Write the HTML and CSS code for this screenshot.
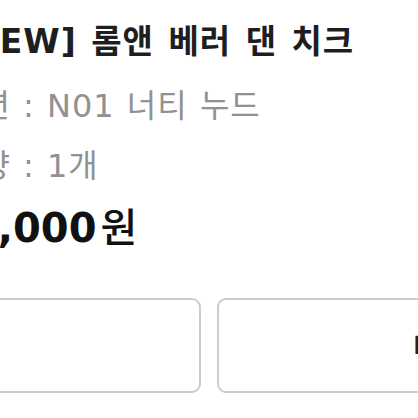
FILE: index.html
```html
<!DOCTYPE html>
<html lang="ko">

<head>
    <meta charset="UTF-8">
    <meta name="viewport" content="width=device-width, initial-scale=1.0">
    <title>장바구니</title>
    <link rel="stylesheet" href="styles.css">
</head>

<body>
    <div class="item">
        <!-- 상품 정보 -->
        <div class="item-name">[NEW] 롬앤 베러 댄 치크</div>
        <div class="item-meta">옵션 : N01 너티 누드</div>
        <div class="item-meta item-qty">수량 : 1개</div>
        <div class="item-price">9,000<span class="won">원</span></div>

        <!-- 버튼 -->
        <div class="item-actions">
            <button class="btn">삭제</button>
            <button class="btn">바로구매</button>
        </div>
    </div>
</body>

</html>
```

FILE: styles.css
```css
html,
body {
    margin: 0;
    padding: 0;
    background-color: #ffffff;
    overflow: hidden;
}

body {
    font-family: "DejaVu Sans", "Noto Sans CJK KR", sans-serif;
    color: #1e1e1e;
    width: 418px;
    height: 418px;
}

.item {
    margin-left: -45px;
    padding-top: 22px;
    white-space: nowrap;
}

.item-name {
    font-size: 33px;
    line-height: 40px;
    font-weight: 700;
    letter-spacing: 1px;
    word-spacing: 2px;
}

.item-meta {
    font-size: 32px;
    line-height: 40px;
    color: #919191;
    margin-top: 24px;
    margin-left: -5px;
    letter-spacing: 1px;
    word-spacing: 1px;
}

.item-qty {
    margin-top: 20px;
}

.item-price {
    font-size: 40px;
    line-height: 48px;
    font-weight: 700;
    color: #111111;
    margin-top: 18px;
    margin-left: 15px;
}

.item-price .won {
    font-weight: 500;
    margin-left: 4px;
}

.item-actions {
    display: flex;
    gap: 16px;
    margin-top: 46px;
    margin-left: -250px;
}

.btn {
    width: 496px;
    height: 95px;
    flex-shrink: 0;
    background-color: #ffffff;
    border: 2px solid #cccccc;
    border-radius: 9px;
    font-family: inherit;
    font-size: 28px;
    font-weight: 700;
    color: #222222;
    display: flex;
    align-items: center;
    justify-content: center;
}
```
